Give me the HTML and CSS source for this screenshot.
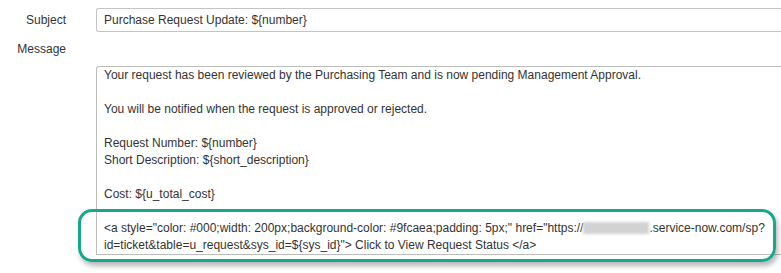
FILE: index.html
```html
<!DOCTYPE html>
<html lang="en">

<head>
    <meta charset="UTF-8">
    <title>Notification - Message</title>
    <link rel="stylesheet" href="styles.css">
</head>

<body>

    <!-- Notification form -->
    <div class="form">
        <div class="row subject-row">
            <label class="label">Subject</label>
            <div class="input">Purchase Request Update: ${number}</div>
        </div>

        <div class="row message-row">
            <label class="label">Message</label>
        </div>

        <div class="row editor-row">
            <div class="label"></div>
            <div class="editor">
                <p>Your request has been reviewed by the Purchasing Team and is now pending Management Approval.</p>
                <p>&nbsp;</p>
                <p>You will be notified when the request is approved or rejected.</p>
                <p>&nbsp;</p>
                <p>Request Number: ${number}</p>
                <p>Short Description: ${short_description}</p>
                <p>&nbsp;</p>
                <p>Cost: ${u_total_cost}</p>
                <p>&nbsp;</p>
                <p>&lt;a style="color: #000;width: 200px;background-color: #9fcaea;padding: 5px;" href="https://<span class="redacted"></span>.service-now.com/sp?<br>id=ticket&amp;table=u_request&amp;sys_id=${sys_id}"&gt; Click to View Request Status &lt;/a&gt;</p>
            </div>
        </div>
    </div>

    <!-- Highlight around the link line -->
    <div class="highlight"></div>

</body>

</html>
```

FILE: styles.css
```css
body,
html {
    margin: 0;
    padding: 0;
    overflow: hidden;
    width: 781px;
    height: 273px;
    background-color: #ffffff;
    font-family: 'Liberation Sans', Arial, sans-serif;
    font-size: 12px;
    color: #333333;
}

.form {
    padding-top: 8px;
}

.row {
    display: flex;
    align-items: flex-start;
}

.label {
    width: 66px;
    flex-shrink: 0;
    margin-right: 30px;
    text-align: right;
    color: #333333;
    font-size: 12px;
}

/* Subject */
.subject-row .label {
    line-height: 24px;
}

.input {
    flex: 1;
    height: 22px;
    line-height: 22px;
    padding: 0 7px;
    border: 1px solid #c4c4c4;
    border-right: none;
    border-radius: 3px 0 0 3px;
    color: #333333;
    margin-right: -10px;
}

/* Message */
.message-row {
    margin-top: 8px;
}

.message-row .label {
    line-height: 18px;
}

.editor-row {
    margin-top: 8px;
}

.editor {
    flex: 1;
    box-sizing: border-box;
    height: 189px;
    padding: 0 7px;
    border: 1px solid #bdbdbd;
    border-right: none;
    border-radius: 3px 0 0 0;
    margin-right: -10px;
    overflow: hidden;
}

.editor p {
    margin: 0;
    line-height: 17px;
    white-space: nowrap;
}

.redacted {
    display: inline-block;
    width: 66px;
    height: 12px;
    vertical-align: -2px;
    background-color: #d2d2d2;
    filter: blur(1.5px);
}

/* Annotation */
.highlight {
    position: absolute;
    left: 78px;
    top: 209px;
    width: 692px;
    height: 47px;
    border: 3px solid #16a88b;
    border-radius: 14px;
    box-shadow: 2px 4px 5px rgba(0, 0, 0, 0.28);
}
```
